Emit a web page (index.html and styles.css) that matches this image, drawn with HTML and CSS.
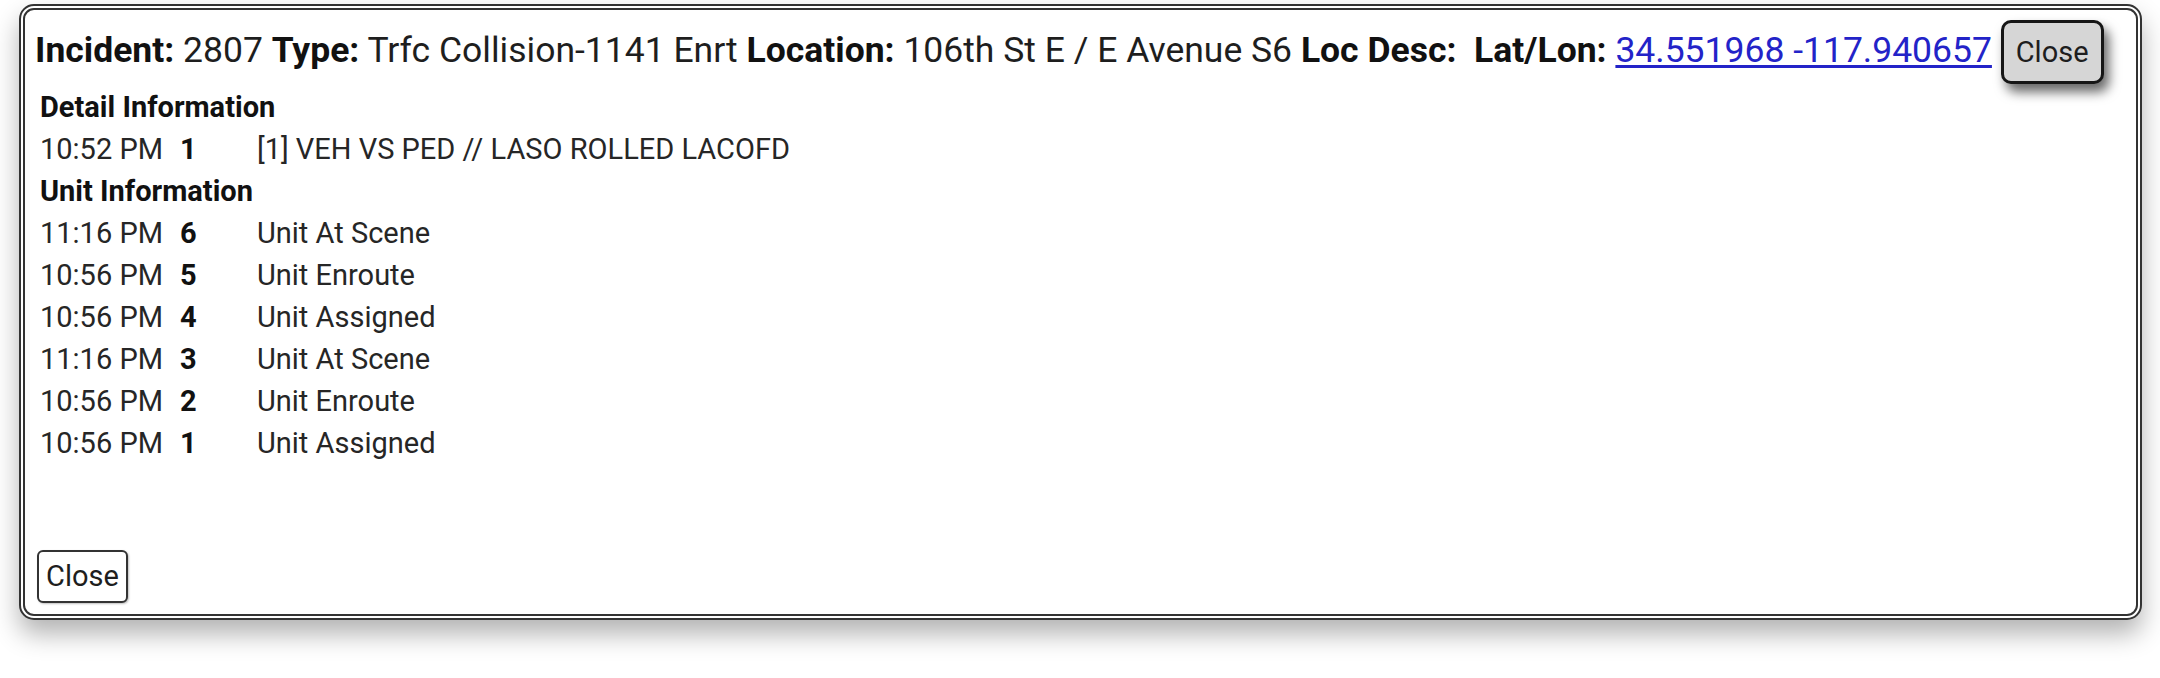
FILE: index.html
```html
<!DOCTYPE html>
<html lang="en">
<head>
<meta charset="utf-8">
<title>Incident 2807</title>
<link rel="stylesheet" href="styles.css">
</head>
<body>
<div class="page">
<div class="dialog">
  <div class="header">
    <b>Incident:</b> 2807 <b>Type:</b> Trfc Collision-1141 Enrt <b>Location:</b> 106th St E / E Avenue S6 <b>Loc Desc:</b>&nbsp; <b>Lat/Lon:</b> <a href="#" class="coords">34.551968 -117.940657</a> <button class="btn-top">Close</button>
  </div>
  <div class="content">
    <div class="section-title">Detail Information</div>
    <div class="row"><span class="time">10:52 PM</span><span class="num">1</span><span class="desc">[1] VEH VS PED // LASO ROLLED LACOFD</span></div>
    <div class="section-title">Unit Information</div>
    <div class="row"><span class="time">11:16 PM</span><span class="num">6</span><span class="desc">Unit At Scene</span></div>
    <div class="row"><span class="time">10:56 PM</span><span class="num">5</span><span class="desc">Unit Enroute</span></div>
    <div class="row"><span class="time">10:56 PM</span><span class="num">4</span><span class="desc">Unit Assigned</span></div>
    <div class="row"><span class="time">11:16 PM</span><span class="num">3</span><span class="desc">Unit At Scene</span></div>
    <div class="row"><span class="time">10:56 PM</span><span class="num">2</span><span class="desc">Unit Enroute</span></div>
    <div class="row"><span class="time">10:56 PM</span><span class="num">1</span><span class="desc">Unit Assigned</span></div>
  </div>
  <div class="footer">
    <button class="btn-bottom">Close</button>
  </div>
</div>
</div>
</body>
</html>
```

FILE: styles.css
```css
html, body {
  margin: 0;
  padding: 0;
  background: #ffffff;
}

body {
  font-family: Roboto, "Liberation Sans", Arial, sans-serif;
  color: #1e1e1e;
}

.page {
  min-height: 678px;
  padding: 4px 0 0 19px;
  box-sizing: border-box;
}

.dialog {
  box-sizing: border-box;
  width: 2123px;
  height: 616px;
  border: 6px double #333333;
  border-radius: 15px;
  background: #ffffff;
  box-shadow: 0 14px 26px rgba(0, 0, 0, 0.3);
  display: flex;
  flex-direction: column;
}

.header {
  padding: 10px 0 0 10px;
  font-size: 35.5px;
  line-height: normal;
  color: #1e1e1e;
  white-space: nowrap;
}

.header b {
  font-weight: 700;
  color: #111111;
}

.coords {
  color: #2323c8;
  text-decoration: underline;
  text-underline-offset: 3px;
}

button {
  font-family: Roboto, "Liberation Sans", Arial, sans-serif;
  font-size: 29px;
  line-height: 34px;
  color: #1e1e1e;
  cursor: pointer;
}

.btn-top {
  padding: 12px 12px 12px 12px;
  background: #d6d6d6;
  border: 3px solid #161616;
  border-radius: 10px;
  box-shadow: 5px 8px 12px rgba(0, 0, 0, 0.6);
  vertical-align: baseline;
}

.content {
  padding: 2px 0 0 15px;
  font-size: 29px;
  line-height: 42px;
}

.section-title {
  font-weight: 700;
  color: #111111;
}

.row {
  display: grid;
  grid-template-columns: 140px 77px auto;
}

.time {
  color: #262626;
}

.num {
  font-weight: 700;
  color: #111111;
}

.desc {
  color: #262626;
}

.footer {
  margin-top: auto;
  padding: 0 0 11px 12px;
}

.btn-bottom {
  padding: 7px 7px 8px 7px;
  background: #ffffff;
  border: 2px solid #333333;
  border-radius: 6px;
  box-shadow: 1px 1px 2px rgba(0, 0, 0, 0.25);
}
```
